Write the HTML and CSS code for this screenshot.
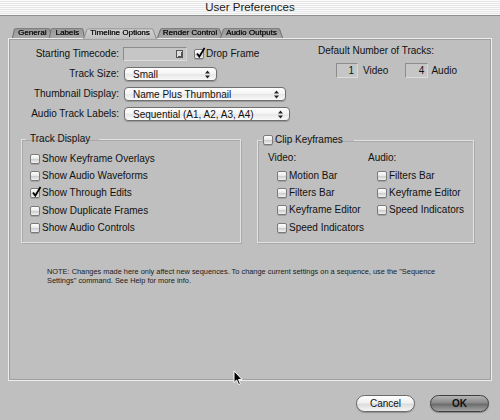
FILE: index.html
```html
<!DOCTYPE html>
<html>
<head>
<meta charset="utf-8">
<title>User Preferences</title>
<link rel="stylesheet" href="styles.css">
</head>
<body>
<div class="window">
  <div class="titlebar">User Preferences</div>
  <div class="tabs">
    <span class="tab">General</span>
    <span class="tab">Labels</span>
    <span class="tab active">Timeline Options</span>
    <span class="tab">Render Control</span>
    <span class="tab">Audio Outputs</span>
  </div>
  <div class="panel">
    <div class="top">
      <div class="form">
        <span class="lbl">Starting Timecode:</span>
        <div class="ctl">
          <span class="tc"><span class="tc-icon"></span></span>
          <span class="cb cb-drop"><svg viewBox="0 0 10 10"><path d="M2 4.5 L4.3 7.6 L9.5 -1" /></svg></span>
          <span class="txt">Drop Frame</span>
        </div>
        <span class="lbl">Track Size:</span>
        <div class="ctl"><span class="popup w1">Small<svg class="arr" viewBox="0 0 5 9"><path d="M0 3.5 L2.5 0.5 L5 3.5Z M0 5.5 L2.5 8.5 L5 5.5Z"/></svg></span></div>
        <span class="lbl">Thumbnail Display:</span>
        <div class="ctl"><span class="popup w2">Name Plus Thumbnail<svg class="arr" viewBox="0 0 5 9"><path d="M0 3.5 L2.5 0.5 L5 3.5Z M0 5.5 L2.5 8.5 L5 5.5Z"/></svg></span></div>
        <span class="lbl">Audio Track Labels:</span>
        <div class="ctl"><span class="popup w3">Sequential (A1, A2, A3, A4)<svg class="arr" viewBox="0 0 5 9"><path d="M0 3.5 L2.5 0.5 L5 3.5Z M0 5.5 L2.5 8.5 L5 5.5Z"/></svg></span></div>
      </div>
      <div class="tracks">
        <div class="tracks-title">Default Number of Tracks:</div>
        <div class="tracks-row">
          <span class="num">1</span><span class="txt">Video</span>
          <span class="num num2">4</span><span class="txt">Audio</span>
        </div>
      </div>
    </div>
    <div class="groups">
      <fieldset class="group g1">
        <legend class="legend1">Track Display</legend>
        <div class="row"><span class="cb"></span><span class="txt">Show Keyframe Overlays</span></div>
        <div class="row"><span class="cb"></span><span class="txt">Show Audio Waveforms</span></div>
        <div class="row"><span class="cb"><svg viewBox="0 0 10 10"><path d="M2 4.5 L4.3 7.6 L9.5 -1" /></svg></span><span class="txt">Show Through Edits</span></div>
        <div class="row"><span class="cb"></span><span class="txt">Show Duplicate Frames</span></div>
        <div class="row"><span class="cb"></span><span class="txt">Show Audio Controls</span></div>
      </fieldset>
      <fieldset class="group g2">
        <legend class="legend2"><span class="cb"></span><span class="txt">Clip Keyframes</span></legend>
        <div class="cols">
          <div class="col">
            <div class="colhead">Video:</div>
            <div class="row"><span class="cb"></span><span class="txt">Motion Bar</span></div>
            <div class="row"><span class="cb"></span><span class="txt">Filters Bar</span></div>
            <div class="row"><span class="cb"></span><span class="txt">Keyframe Editor</span></div>
            <div class="row"><span class="cb"></span><span class="txt">Speed Indicators</span></div>
          </div>
          <div class="col col2">
            <div class="colhead">Audio:</div>
            <div class="row"><span class="cb"></span><span class="txt">Filters Bar</span></div>
            <div class="row"><span class="cb"></span><span class="txt">Keyframe Editor</span></div>
            <div class="row"><span class="cb"></span><span class="txt">Speed Indicators</span></div>
          </div>
        </div>
      </fieldset>
    </div>
    <p class="note">NOTE: Changes made here only affect new sequences. To change current settings on a sequence, use the "Sequence Settings" command. See Help for more info.</p>
  </div>
  <div class="buttons">
    <span class="btn cancel">Cancel</span>
    <span class="btn ok">OK</span>
  </div>
  <svg class="cursor" viewBox="0 0 10 16" width="10" height="16"><path d="M1 1 L1 12.5 L3.6 10 L5.6 14.6 L7.4 13.8 L5.5 9.4 L9 9.4 Z" fill="#000" stroke="#fff" stroke-width="1"/></svg>
</div>
</body>
</html>
```

FILE: styles.css
```css
* { box-sizing: border-box; }
html, body { margin: 0; padding: 0; }
body {
  background: #bfbfbf;
  font-family: "Liberation Sans", Arial, sans-serif;
  font-size: 10px;
  color: #111;
}
.window {
  position: relative;
  width: 500px;
  height: 420px;
  overflow: hidden;
  background: #bfbfbf;
}
.titlebar {
  height: 16px;
  line-height: 15px;
  text-align: center;
  font-size: 11.5px;
  color: #1a1a1a;
  background: repeating-linear-gradient(180deg, #fbfbfb 0px, #fbfbfb 1px, #e6e6e6 1px, #e6e6e6 2px);
  border-bottom: 1px solid #8e8e8e;
}
.tabs {
  display: flex;
  height: 11px;
  margin-top: 11px;
  padding-left: 12px;
  position: relative;
  z-index: 1;
}
.tab {
  position: relative;
  height: 11px;
  line-height: 12px;
  font-size: 8px;
  color: #111;
  padding: 0 6px;
  margin-right: -3px;
  white-space: nowrap;
  text-shadow: 0.3px 0 0 #111;
}
.tab::before {
  content: "";
  position: absolute;
  left: 0; right: 0; top: 0; bottom: 0;
  background: linear-gradient(#999999, #a8a8a8);
  border: 1px solid #6a6a6a;
  border-bottom: none;
  border-radius: 2px 2px 0 0;
  transform: perspective(20px) rotateX(12deg);
  transform-origin: bottom;
  z-index: -1;
}
.tab.active { margin: 0 0 0 1px; padding: 0 7px; }
.tab.active::before {
  background: linear-gradient(#d2d2d2, #bfbfbf);
  border-color: #8a8a8a;
  bottom: -1px;
}
.panel {
  margin: 0 8px;
  height: 343px;
  border: 1px solid #ececec;
  box-shadow: inset 0 0 0 1px #a0a0a0;
  padding-top: 8px;
}
.top { display: flex; }
.form {
  width: 282px;
  display: grid;
  grid-template-columns: 110px auto;
  grid-auto-rows: 14px;
  column-gap: 4px;
  row-gap: 6px;
}
.lbl {
  text-align: right;
  line-height: 14px;
  white-space: nowrap;
}
.ctl { display: flex; align-items: center; }
.txt { white-space: nowrap; line-height: 14px; }
.tc {
  position: relative;
  width: 64px;
  height: 14px;
  background: #c6c6c6;
  border: 1px solid #8c8c8c;
  border-right-color: #d6d6d6;
  border-bottom-color: #dcdcdc;
}
.tc-icon {
  position: absolute;
  right: 3px;
  top: 2px;
  width: 7px;
  height: 8px;
  border: 1px solid #555;
  background: #ddd;
}
.tc-icon::after {
  content: "";
  position: absolute;
  left: 1px; top: 1px;
  width: 3px; height: 4px;
  border-right: 1px solid #555;
  border-bottom: 1px solid #555;
}
.cb {
  display: inline-block;
  position: relative;
  flex: none;
  width: 10px;
  height: 10px;
  border: 1px solid #7a7a7a;
  border-radius: 2px;
  background: linear-gradient(#ffffff, #e4e4e4 55%, #cfcfcf 56%, #f2f2f2);
  box-shadow: 0 1px 0 rgba(0,0,0,0.15);
  margin-right: 2px;
}
.cb svg {
  position: absolute;
  left: 0; top: -1px;
  width: 10px; height: 10px;
  overflow: visible;
}
.cb svg path { fill: none; stroke: #000; stroke-width: 1.8; }
.cb-drop { margin-left: 7px; }
.popup {
  position: relative;
  display: block;
  height: 14px;
  line-height: 13px;
  padding-left: 8px;
  border: 1px solid #6f6f6f;
  border-radius: 4px;
  background: linear-gradient(#ffffff, #f3f3f3 50%, #e6e6e6 51%, #fafafa);
  box-shadow: 0 1px 1px rgba(0,0,0,0.2);
  margin-left: 1px;
  white-space: nowrap;
}
.popup .arr {
  position: absolute;
  right: 6px;
  top: 2px;
  width: 5px;
  height: 9px;
  fill: #222;
}
.w1 { width: 93px; }
.w2 { width: 162px; }
.w3 { width: 166px; }
.tracks { margin-left: 27px; margin-top: -3px; }
.tracks-title { line-height: 14px; white-space: nowrap; }
.tracks-row {
  display: flex;
  align-items: center;
  margin-top: 5px;
  padding-left: 18px;
}
.num {
  width: 22px;
  height: 15px;
  line-height: 14px;
  text-align: right;
  padding-right: 3px;
  background: #c6c6c6;
  border: 1px solid #8c8c8c;
  border-right-color: #d8d8d8;
  border-bottom-color: #dcdcdc;
  margin-right: 5px;
}
.num2 { margin-left: 17px; width: 23px; margin-right: 3px; }
.groups {
  display: flex;
  gap: 16px;
  margin-top: 12px;
  margin-left: 12px;
}
.group {
  margin: 0;
  height: 110px;
  border: 1px solid #e2e2e2;
  box-shadow: inset 1px 1px 0 #a9a9a9, 1px 1px 0 #a9a9a9;
  padding: 4px 0 0 4px;
  min-width: 0;
}
.g1 { width: 220px; padding-top: 5px; }
.g2 { width: 217px; }
legend {
  padding: 0;
  line-height: 12px;
  white-space: nowrap;
}
.legend1 { padding: 0 9px 0 4px; }
.legend2 { padding: 0 11px 0 0; display: flex; align-items: center; }
.legend2 .cb { margin-left: 1px; }
.row {
  display: flex;
  align-items: center;
  height: 17.4px;
}
.g1 .row { padding-left: 4px; }
.cols { display: flex; }
.col { width: 99px; padding-left: 6px; }
.col2 { width: 110px; padding-left: 7px; }
.colhead { height: 13px; line-height: 13px; margin-bottom: 3px; }
.col .row { padding-left: 9px; }
.note {
  margin: 24px 0 0 38px;
  width: 410px;
  font-size: 7.4px;
  line-height: 9px;
  color: #1a1a1a;
}
.buttons {
  display: flex;
  justify-content: flex-end;
  gap: 15px;
  padding-right: 11px;
  margin-top: 14px;
}
.btn {
  width: 59px;
  height: 17px;
  line-height: 16px;
  text-align: center;
  border-radius: 9px;
  font-size: 10px;
  color: #111;
}
.cancel {
  border: 1px solid #6a6a6a;
  background: linear-gradient(#ffffff, #f0f0f0 45%, #dcdcdc 55%, #f6f6f6);
  box-shadow: 0 1px 1px rgba(0,0,0,0.25);
}
.ok {
  border: 1px solid #3e3e3e;
  background: linear-gradient(#b4b4b4, #8a8a8a 45%, #6c6c6c 55%, #a4a4a4);
  box-shadow: 0 1px 1px rgba(0,0,0,0.3);
  font-weight: bold;
}
.cursor {
  position: absolute;
  left: 233px;
  top: 370px;
}
```
